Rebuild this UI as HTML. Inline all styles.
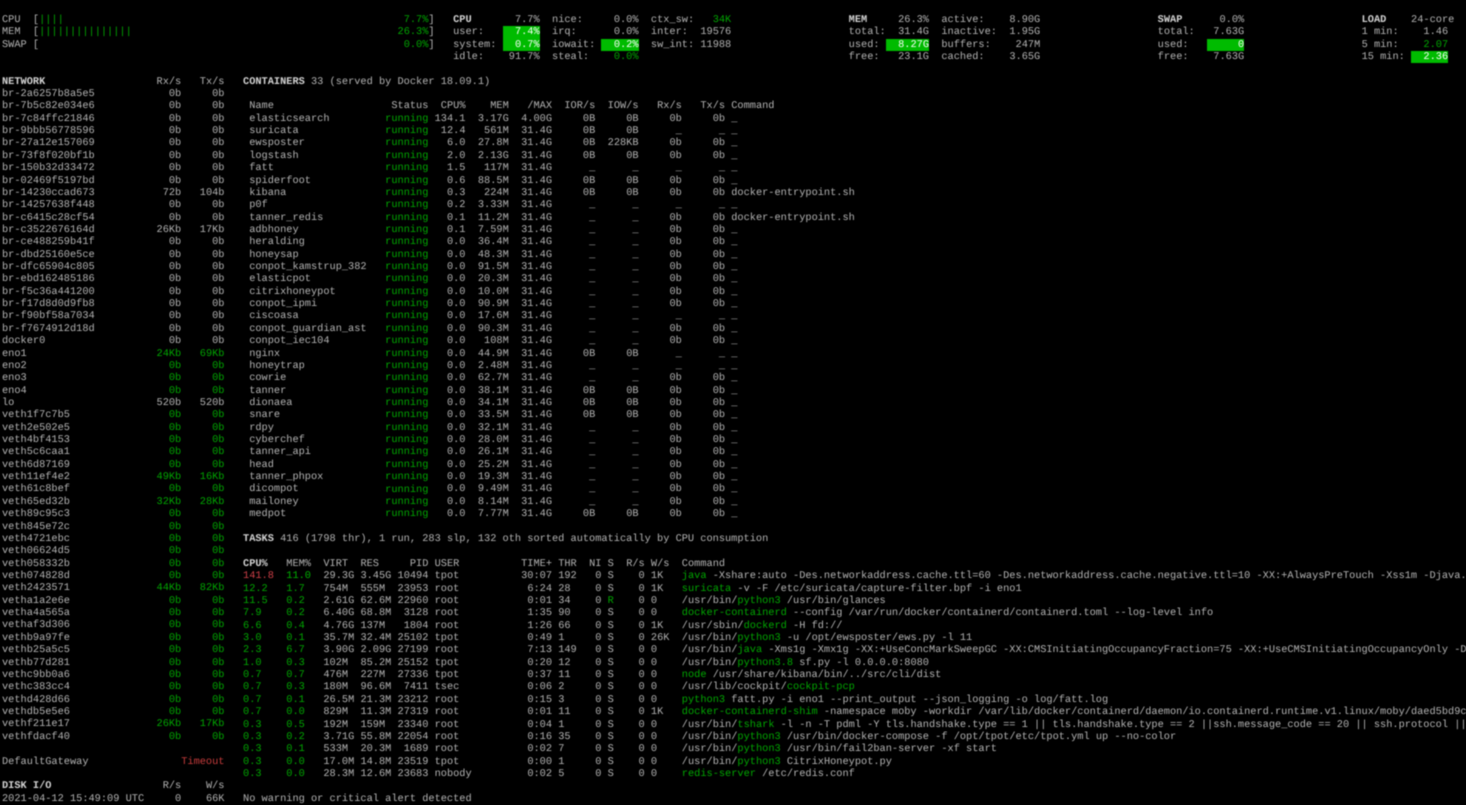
<!DOCTYPE html>
<html><head><meta charset="utf-8"><title>glances</title>
<style>
html,body{margin:0;padding:0;background:#000;width:1466px;height:805px;overflow:hidden}
#t{position:absolute;left:0;top:0;width:1466px;height:805px;overflow:hidden;background:#000;filter:blur(.4px);color:#b4b4b4;
font:10.3px/12.365px "Liberation Mono",monospace;text-rendering:geometricPrecision}
pre{position:absolute;margin:0;font:inherit;line-height:12.365px;white-space:pre;top:calc(13.8px + 12.365px*var(--r));left:calc(2px + 6.18px*var(--c))}
pre.e{left:auto;right:calc(1464px - 6.18px*(var(--c) + 1));text-align:right}
pre.h{background:#0b0;color:#fff;left:calc(2px + 6.18px*var(--c));right:auto;text-align:right}
b{font-weight:bold;color:#d4d4d4}
.g{color:#00a800}
i{font-style:normal;color:#00a800}
.red{color:#c83c3c}
.bg{color:#00b400}
.br{color:#d04048}
</style></head><body><div id="t">
<pre style="--r:0;--c:0">CPU  [<i>||||</i>
MEM  [<i>|||||||||||||||</i>
SWAP [</pre>
<pre class="e g" style="--r:0;--c:68">7.7%
26.3%
0.0%</pre>
<pre class="e" style="--r:0;--c:69">]
]
]</pre>

<pre style="--r:0;--c:73"><b>CPU</b>
user:
system:
idle:</pre>
<pre class="e" style="--r:0;--c:86">7.7%


91.7%</pre>
<pre class="h" style="--r:1;--c:81;width:37.1px">7.4%
0.7%</pre>
<pre style="--r:0;--c:89">nice:
irq:
iowait:
steal:</pre>
<pre class="e" style="--r:0;--c:102">0.0%
0.0%</pre>
<pre class="h" style="--r:2;--c:97;width:37.1px">0.2%</pre>
<pre class="e g" style="--r:3;--c:102">0.0%</pre>
<pre style="--r:0;--c:105">ctx_sw:
inter:
sw_int:</pre>
<pre class="e" style="--r:0;--c:117"><i>34K</i>
19576
11988</pre>

<pre style="--r:0;--c:137"><b>MEM</b>
total:
used:
free:</pre>
<pre class="e" style="--r:0;--c:149">26.3%
31.4G

23.1G</pre>
<pre class="h" style="--r:2;--c:143;width:43.3px">8.27G</pre>
<pre style="--r:0;--c:152">active:
inactive:
buffers:
cached:</pre>
<pre class="e" style="--r:0;--c:167">8.90G
1.95G
247M
3.65G</pre>

<pre style="--r:0;--c:187"><b>SWAP</b>
total:
used:
free:</pre>
<pre class="e" style="--r:0;--c:200">0.0%
7.63G

7.63G</pre>
<pre class="h" style="--r:2;--c:195;width:37.1px">0</pre>

<pre style="--r:0;--c:220"><b>LOAD</b>
1 min:
5 min:
15 min:</pre>
<pre class="e" style="--r:0;--c:234">24-core</pre>
<pre class="e" style="--r:1;--c:233">1.46
<i>2.07</i></pre>
<pre class="h" style="--r:3;--c:228;width:37.1px">2.36</pre>

<pre style="--r:5;--c:0"><b>NETWORK</b>
br-2a6257b8a5e5
br-7b5c82e034e6
br-7c84ffc21846
br-9bbb56778596
br-27a12e157069
br-73f8f020bf1b
br-150b32d33472
br-02469f5197bd
br-14230ccad673
br-14257638f448
br-c6415c28cf54
br-c3522676164d
br-ce488259b41f
br-dbd25160e5ce
br-dfc65904c805
br-ebd162485186
br-f5c36a441200
br-f17d8d0d9fb8
br-f90bf58a7034
br-f7674912d18d
docker0
eno1
eno2
eno3
eno4
lo
veth1f7c7b5
veth2e502e5
veth4bf4153
veth5c6caa1
veth6d87169
veth11ef4e2
veth61c8bef
veth65ed32b
veth89c95c3
veth845e72c
veth4721ebc
veth06624d5
veth058332b
veth074828d
veth2423571
vetha1a2e6e
vetha4a565a
vethaf3d306
vethb9a97fe
vethb25a5c5
vethb77d281
vethc9bb0a6
vethc383cc4
vethd428d66
vethdb5e5e6
vethf211e17
vethfdacf40</pre>
<pre class="e" style="--r:5;--c:28">Rx/s
0b
0b
0b
0b
0b
0b
0b
0b
72b
0b
0b
26Kb
0b
0b
0b
0b
0b
0b
0b
0b
0b
<i>24Kb</i>
<i>0b</i>
<i>0b</i>
<i>0b</i>
520b
<i>0b</i>
<i>0b</i>
<i>0b</i>
<i>0b</i>
<i>0b</i>
<i>49Kb</i>
<i>0b</i>
<i>32Kb</i>
<i>0b</i>
<i>0b</i>
<i>0b</i>
<i>0b</i>
<i>0b</i>
<i>0b</i>
<i>44Kb</i>
<i>0b</i>
<i>0b</i>
<i>0b</i>
<i>0b</i>
<i>0b</i>
<i>0b</i>
<i>0b</i>
<i>0b</i>
<i>0b</i>
<i>0b</i>
<i>26Kb</i>
<i>0b</i></pre>
<pre class="e" style="--r:5;--c:35">Tx/s
0b
0b
0b
0b
0b
0b
0b
0b
104b
0b
0b
17Kb
0b
0b
0b
0b
0b
0b
0b
0b
0b
<i>69Kb</i>
<i>0b</i>
<i>0b</i>
<i>0b</i>
520b
<i>0b</i>
<i>0b</i>
<i>0b</i>
<i>0b</i>
<i>0b</i>
<i>16Kb</i>
<i>0b</i>
<i>28Kb</i>
<i>0b</i>
<i>0b</i>
<i>0b</i>
<i>0b</i>
<i>0b</i>
<i>0b</i>
<i>82Kb</i>
<i>0b</i>
<i>0b</i>
<i>0b</i>
<i>0b</i>
<i>0b</i>
<i>0b</i>
<i>0b</i>
<i>0b</i>
<i>0b</i>
<i>0b</i>
<i>17Kb</i>
<i>0b</i></pre>
<pre style="--r:60;--c:0">DefaultGateway</pre>
<pre class="e red" style="--r:60;--c:35">Timeout</pre>
<pre style="--r:62;--c:0"><b>DISK I/O</b>
2021-04-12 15:49:09 UTC</pre>
<pre class="e" style="--r:62;--c:28">R/s
0</pre>
<pre class="e" style="--r:62;--c:35">W/s
66K</pre>

<pre style="--r:5;--c:39"><b>CONTAINERS</b> 33 (served by Docker 18.09.1)</pre>
<pre style="--r:7;--c:40">Name
elasticsearch
suricata
ewsposter
logstash
fatt
spiderfoot
kibana
p0f
tanner_redis
adbhoney
heralding
honeysap
conpot_kamstrup_382
elasticpot
citrixhoneypot
conpot_ipmi
ciscoasa
conpot_guardian_ast
conpot_iec104
nginx
honeytrap
cowrie
tanner
dionaea
snare
rdpy
cyberchef
tanner_api
head
tanner_phpox
dicompot
mailoney
medpot</pre>
<pre class="e" style="--r:7;--c:68">Status</pre>
<pre class="e g" style="--r:8;--c:68">running
running
running
running
running
running
running
running
running
running
running
running
running
running
running
running
running
running
running
running
running
running
running
running
running
running
running
running
running
running
running
running
running</pre>
<pre class="e" style="--r:7;--c:74">CPU%
134.1
12.4
6.0
2.0
1.5
0.6
0.3
0.2
0.1
0.1
0.0
0.0
0.0
0.0
0.0
0.0
0.0
0.0
0.0
0.0
0.0
0.0
0.0
0.0
0.0
0.0
0.0
0.0
0.0
0.0
0.0
0.0
0.0</pre>
<pre class="e" style="--r:7;--c:81">MEM
3.17G
561M
27.8M
2.13G
117M
88.5M
224M
3.33M
11.2M
7.59M
36.4M
48.3M
91.5M
20.3M
10.0M
90.9M
17.6M
90.3M
108M
44.9M
2.48M
62.7M
38.1M
34.1M
33.5M
32.1M
28.0M
26.1M
25.2M
19.3M
9.49M
8.14M
7.77M</pre>
<pre class="e" style="--r:7;--c:88">/MAX
4.00G
31.4G
31.4G
31.4G
31.4G
31.4G
31.4G
31.4G
31.4G
31.4G
31.4G
31.4G
31.4G
31.4G
31.4G
31.4G
31.4G
31.4G
31.4G
31.4G
31.4G
31.4G
31.4G
31.4G
31.4G
31.4G
31.4G
31.4G
31.4G
31.4G
31.4G
31.4G
31.4G</pre>
<pre class="e" style="--r:7;--c:95">IOR/s
0B
0B
0B
0B
_
0B
0B
_
_
_
_
_
_
_
_
_
_
_
_
0B
_
_
0B
0B
0B
_
_
_
_
_
_
_
0B</pre>
<pre class="e" style="--r:7;--c:102">IOW/s
0B
0B
228KB
0B
_
0B
0B
_
_
_
_
_
_
_
_
_
_
_
_
0B
_
_
0B
0B
0B
_
_
_
_
_
_
_
0B</pre>
<pre class="e" style="--r:7;--c:109">Rx/s
0b
_
0b
0b
_
0b
0b
_
0b
0b
0b
0b
0b
0b
0b
0b
_
0b
0b
_
_
0b
0b
0b
0b
0b
0b
0b
0b
0b
0b
0b
0b</pre>
<pre class="e" style="--r:7;--c:116">Tx/s
0b
_
0b
0b
_
0b
0b
_
0b
0b
0b
0b
0b
0b
0b
0b
_
0b
0b
_
_
0b
0b
0b
0b
0b
0b
0b
0b
0b
0b
0b
0b</pre>
<pre style="--r:7;--c:118">Command
_
_
_
_
_
_
docker-entrypoint.sh
_
docker-entrypoint.sh
_
_
_
_
_
_
_
_
_
_
_
_
_
_
_
_
_
_
_
_
_
_
_
_</pre>

<pre style="--r:42;--c:39"><b>TASKS</b> 416 (1798 thr), 1 run, 283 slp, 132 oth sorted automatically by CPU consumption</pre>
<pre style="--r:44;--c:39"><b>CPU%</b>
<span class="br">141.8</span>
<i>12.2</i>
<i>11.5</i>
<i>7.9</i>
<i>6.6</i>
<i>3.0</i>
<i>2.3</i>
<i>1.0</i>
<i>0.7</i>
<i>0.7</i>
<i>0.7</i>
<i>0.7</i>
<i>0.3</i>
<i>0.3</i>
<i>0.3</i>
<i>0.3</i>
<i>0.3</i></pre>
<pre style="--r:44;--c:46">MEM%
<span class="bg">11.0</span>
<i>1.7</i>
<i>0.2</i>
<i>0.2</i>
<i>0.4</i>
<i>0.1</i>
<i>6.7</i>
<i>0.3</i>
<i>0.7</i>
<i>0.3</i>
<i>0.1</i>
<i>0.0</i>
<i>0.5</i>
<i>0.2</i>
<i>0.1</i>
<i>0.0</i>
<i>0.0</i></pre>
<pre style="--r:44;--c:52">VIRT
29.3G
754M
2.61G
6.40G
4.76G
35.7M
3.90G
102M
476M
180M
26.5M
829M
192M
3.71G
533M
17.0M
28.3M</pre>
<pre style="--r:44;--c:58">RES
3.45G
555M
62.6M
68.8M
137M
32.4M
2.09G
85.2M
227M
96.6M
21.3M
11.3M
159M
55.8M
20.3M
14.8M
12.6M</pre>
<pre class="e" style="--r:44;--c:68">PID
10494
23953
22960
3128
1804
25102
27199
25152
27336
7411
23212
27319
23340
22054
1689
23519
23683</pre>
<pre style="--r:44;--c:70">USER
tpot
root
root
root
root
tpot
root
tpot
tpot
tsec
root
root
root
root
root
tpot
nobody</pre>
<pre class="e" style="--r:44;--c:88">TIME+
30:07
6:24
0:01
1:35
1:26
0:49
7:13
0:20
0:37
0:06
0:15
0:01
0:04
0:16
0:02
0:00
0:02</pre>
<pre style="--r:44;--c:90">THR
192
28
34
90
66
1
149
12
11
2
3
11
1
35
7
1
5</pre>
<pre class="e" style="--r:44;--c:96">NI
0
0
0
0
0
0
0
0
0
0
0
0
0
0
0
0
0</pre>
<pre style="--r:44;--c:98">S
S
S
<i>R</i>
S
S
S
S
S
S
S
S
S
S
S
S
S
S</pre>
<pre class="e" style="--r:44;--c:103">R/s
0
0
0
0
0
0
0
0
0
0
0
0
0
0
0
0
0</pre>
<pre style="--r:44;--c:105">W/s
1K
1K
0
0
1K
26K
0
0
0
0
0
1K
0
0
0
0
0</pre>
<pre style="--r:44;--c:110">Command
<i>java</i> -Xshare:auto -Des.networkaddress.cache.ttl=60 -Des.networkaddress.cache.negative.ttl=10 -XX:+AlwaysPreTouch -Xss1m -Djava.awt.headless=true
<i>suricata</i> -v -F /etc/suricata/capture-filter.bpf -i eno1
/usr/bin/<i>python3</i> /usr/bin/glances
<i>docker-containerd</i> --config /var/run/docker/containerd/containerd.toml --log-level info
/usr/sbin/<i>dockerd</i> -H fd://
/usr/bin/<i>python3</i> -u /opt/ewsposter/ews.py -l 11
/usr/bin/<i>java</i> -Xms1g -Xmx1g -XX:+UseConcMarkSweepGC -XX:CMSInitiatingOccupancyFraction=75 -XX:+UseCMSInitiatingOccupancyOnly -Des.networkaddress
/usr/bin/<i>python3.8</i> sf.py -l 0.0.0.0:8080
<i>node</i> /usr/share/kibana/bin/../src/cli/dist
/usr/lib/cockpit/<i>cockpit-pcp</i>
<i>python3</i> fatt.py -i eno1 --print_output --json_logging -o log/fatt.log
<i>docker-containerd-shim</i> -namespace moby -workdir /var/lib/docker/containerd/daemon/io.containerd.runtime.v1.linux/moby/daed5bd9c
/usr/bin/<i>tshark</i> -l -n -T pdml -Y tls.handshake.type == 1 || tls.handshake.type == 2 ||ssh.message_code == 20 || ssh.protocol || tcp
/usr/bin/<i>python3</i> /usr/bin/docker-compose -f /opt/tpot/etc/tpot.yml up --no-color
/usr/bin/<i>python3</i> /usr/bin/fail2ban-server -xf start
/usr/bin/<i>python3</i> CitrixHoneypot.py
<i>redis-server</i> /etc/redis.conf</pre>
<pre style="--r:63;--c:39">No warning or critical alert detected</pre>
</div></body></html>
